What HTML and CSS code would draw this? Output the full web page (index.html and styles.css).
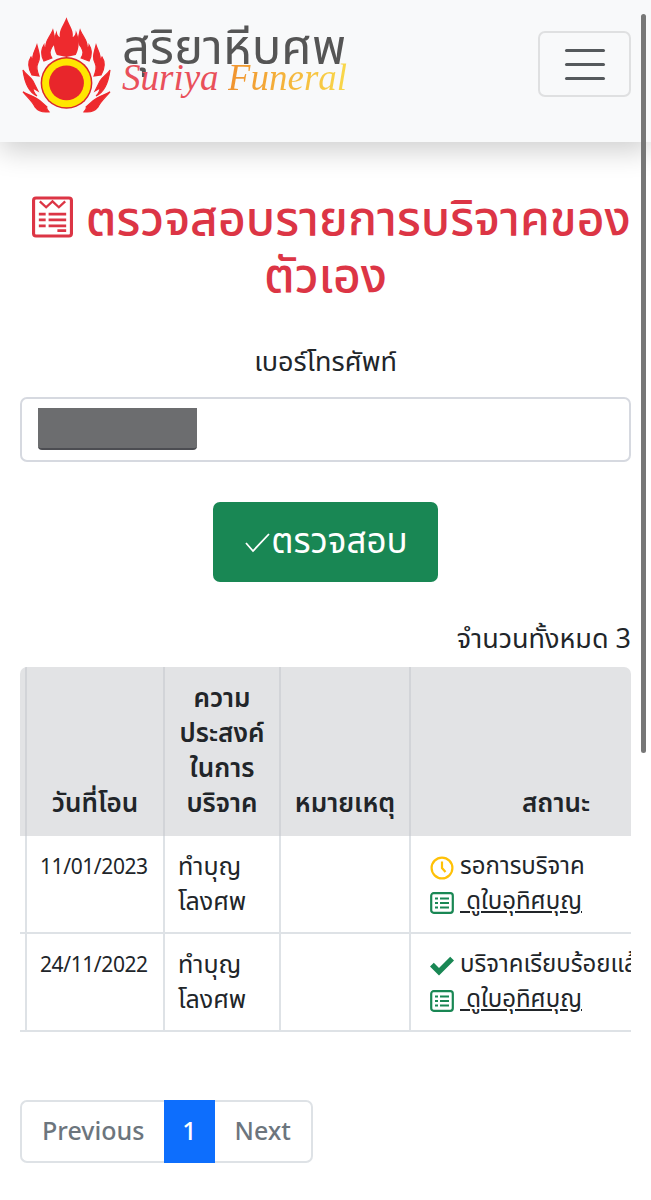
FILE: index.html
```html
<!DOCTYPE html>
<html lang="th">
  <head>
    <meta charset="utf-8">
    <title>ตรวจสอบรายการบริจาค</title>
    <link rel="stylesheet" href="styles.css">
  </head>
  <body>
    <div class="scrollbar"></div>
    <nav class="navbar">
      <a class="brand" href="#">
        <svg class="brand-logo" viewBox="0 0 89.4 98" width="89" height="98">
          <g id="flame-half" fill="#ee2a2e" stroke="#ee2a2e" stroke-width="1.2">
            <path d="M31 15C33 22 34 28 30 32 28 36 27 38 30 43L22 46C18 38 20 33 22 30 22 32 23 33 24 33 23 26 28 22 31 15z"/>
            <path d="M15 30C17 38 19 42 16 48 14 52 15 56 17 61L10 60C5 51 7 45 9 42 10 44 10 45 11 45 10 40 13 36 15 30z"/>
            <path d="M1 55C4 60 9 62 11 66 13 70 14 72 16 76L11 73C11 75 12 78 15 81 8 78 3 70 1 55z"/>
            <path d="M1 77C6 80 13 82 18 86L25 92C24 94 26 96 27 97 20 98 16 96 13 92 10 86 5 82 1 77z"/>
          </g>
          <use href="#flame-half" transform="matrix(-1 0 0 1 89.4 0)"/>
          <path fill="#ee2a2e" d="M44.7 2C47 10 52 14 51 22 54 20 54 17 54 15 58 24 58 32 54 40L44.7 42 35 40C31 32 31 24 35 15 35 17 35 20 38 22 37 14 42 10 44.7 2z"/>
          <circle cx="44.7" cy="68" r="26" fill="#d9262c"/>
          <circle cx="44.7" cy="68" r="24.5" fill="#ffe600"/>
          <circle cx="44.7" cy="68" r="17.5" fill="#e8262b"/>
        </svg>
        <span class="brand-text">
          <span class="brand-thai">สุริยาหีบศพ</span>
          <span class="brand-latin"><span class="brand-s">Suriya</span> <span class="brand-f">Funeral</span></span>
        </span>
      </a>
      <button class="toggler" aria-label="menu">
        <span></span><span></span><span></span>
      </button>
    </nav>

    <main class="container">
      <h1 class="title">
        <svg class="title-icon" viewBox="0 0 42 42" width="41" height="42" fill="none" stroke="#dc3545" stroke-width="3.2">
          <rect x="1.6" y="1.6" width="38.8" height="38.8" rx="2.5"/>
          <path d="M8 5l6.5 6L21 5l6.5 6L34 5" stroke-width="2.4"/>
          <path d="M7 18h7M17 18h18M7 24h7M17 24h18M7 30h7M17 30h18M26 35h9" stroke-width="2.8"/>
        </svg>
        ตรวจสอบรายการบริจาคของ<br>ตัวเอง
      </h1>

      <form class="search">
        <label class="search-label" for="phone">เบอร์โทรศัพท์</label>
        <div class="search-input" id="phone"><span class="redacted"></span></div>
        <button class="btn-check" type="button">
          <svg viewBox="0 0 28 28" width="28" height="28" fill="none" stroke="#fff" stroke-width="1.8"><path d="M3 15l7 8L26 6"/></svg>ตรวจสอบ
        </button>
      </form>

      <div class="total">จำนวนทั้งหมด 3</div>

      <div class="table-wrap">
        <table class="grid">
          <thead>
            <tr>
              <th class="col-cut"></th>
              <th class="col-date">วันที่โอน</th>
              <th class="col-purpose">ความ<br>ประสงค์<br>ในการ<br>บริจาค</th>
              <th class="col-note">หมายเหตุ</th>
              <th class="col-status">สถานะ</th>
            </tr>
          </thead>
          <tbody>
            <tr>
              <td></td>
              <td class="date">11/01/2023</td>
              <td>ทำบุญ<br>โลงศพ</td>
              <td></td>
              <td class="status-cell">
                <div class="status">
                  <svg viewBox="0 0 24 24" width="24" height="24" fill="none" stroke="#ffc107" stroke-width="2.2"><circle cx="12" cy="12" r="10.4"/><path d="M12 5.5V12l3.5 4"/></svg>
                  รอการบริจาค
                </div>
                <a class="doc-link" href="#">
                  <svg viewBox="0 0 24 22" width="24" height="22"><use href="#list-icon"/></svg>
                  <span>&nbsp;ดูใบอุทิศบุญ</span>
                </a>
              </td>
            </tr>
            <tr>
              <td></td>
              <td class="date">24/11/2022</td>
              <td>ทำบุญ<br>โลงศพ</td>
              <td></td>
              <td class="status-cell">
                <div class="status">
                  <svg viewBox="0 0 24 24" width="24" height="24" fill="#198754"><path d="M0 12.5l3.8-3.8 5.2 5.2L20.2 2.8 24 6.6 9 21.5z"/></svg>
                  บริจาคเรียบร้อยแล้ว
                </div>
                <a class="doc-link" href="#">
                  <svg viewBox="0 0 24 22" width="24" height="22"><use href="#list-icon"/></svg>
                  <span>&nbsp;ดูใบอุทิศบุญ</span>
                </a>
              </td>
            </tr>
          </tbody>
        </table>
      </div>

      <ul class="pagination">
        <li class="page-item">Previous</li>
        <li class="page-item active">1</li>
        <li class="page-item">Next</li>
      </ul>
    </main>

    <svg width="0" height="0" class="defs">
      <symbol id="list-icon" viewBox="0 0 24 22">
        <rect x="1.2" y="1.2" width="21.6" height="19.6" rx="2.5" fill="none" stroke="#198754" stroke-width="2.2"/>
        <path d="M5 6.5h3M5 11h3M5 15.5h3M10 6.5h9M10 11h9M10 15.5h9" stroke="#198754" stroke-width="2.2"/>
      </symbol>
    </svg>
  </body>
</html>
```

FILE: styles.css
```css
/* Reset default styles */
* {
  margin: 0;
  padding: 0;
  box-sizing: border-box;
}

/* Page styles */
body {
  font-family: "Noto Sans Thai", "Noto Sans", "DejaVu Sans", sans-serif;
  font-size: 27px;
  font-weight: 400;
  color: #212529;
  background-color: #fff;
  overflow: hidden;
}

.defs {
  position: absolute;
}

.scrollbar {
  position: absolute;
  top: 14px;
  left: 641px;
  width: 5px;
  height: 739px;
  border-radius: 3px;
  background-color: #777;
}

.navbar {
  height: 142px;
  padding: 15px 20px 0 22px;
  display: flex;
  justify-content: space-between;
  align-items: flex-start;
  background-color: #f8f9fa;
  box-shadow: 0 8px 27px rgba(0, 0, 0, 0.2);
}

.brand {
  display: flex;
  gap: 11px;
  text-decoration: none;
}

.brand-text {
  display: flex;
  flex-direction: column;
  padding-top: 8px;
}

.brand-thai {
  font-size: 49px;
  line-height: 52px;
  color: #555;
}

.brand-latin {
  margin-top: -17px;
  font-family: "Liberation Serif", serif;
  font-style: italic;
  font-size: 37px;
  line-height: 40px;
  white-space: nowrap;
}

.brand-s {
  color: #e9505a;
}

.brand-f {
  color: transparent;
  background: linear-gradient(90deg, #f0922e, #f9d84a);
  -webkit-background-clip: text;
  background-clip: text;
}

.toggler {
  width: 93px;
  height: 66px;
  margin-top: 16px;
  display: flex;
  flex-direction: column;
  gap: 11px;
  align-items: center;
  justify-content: center;
  background: transparent;
  border: 2px solid #dfe0e1;
  border-radius: 7px;
}

.toggler span {
  width: 40px;
  height: 3px;
  border-radius: 2px;
  background-color: #55595c;
}

.container {
  padding: 0 20px;
}

.title {
  margin-top: 50px;
  font-size: 48px;
  font-weight: 500;
  line-height: 57px;
  text-align: center;
  white-space: nowrap;
  color: #dc3545;
}

.title-icon {
  vertical-align: -3px;
  margin-left: 12px;
}

.search {
  margin-top: 39px;
  display: flex;
  flex-direction: column;
  align-items: center;
}

.search-label {
  line-height: 36px;
}

.search-input {
  width: 100%;
  height: 65px;
  margin-top: 16px;
  padding: 9px 16px;
  border: 2px solid #d6d9e0;
  border-radius: 7px;
  background-color: #fff;
}

.redacted {
  display: block;
  width: 159px;
  height: 42px;
  border-bottom: 2px solid #4c4d52;
  border-radius: 0 0 4px 4px;
  background-color: #6c6d6f;
}

.btn-check {
  width: 225px;
  height: 80px;
  margin-top: 40px;
  display: flex;
  align-items: center;
  justify-content: center;
  font-family: inherit;
  font-size: 35px;
  font-weight: 400;
  color: #fff;
  background-color: #198754;
  border: none;
  border-radius: 7px;
}

.total {
  margin-top: 40px;
  line-height: 36px;
  text-align: right;
}

.table-wrap {
  margin-top: 9px;
  overflow: hidden;
  border-radius: 7px 7px 0 0;
}

.grid {
  width: 929px;
  table-layout: fixed;
  border-collapse: collapse;
}

.grid th {
  height: 169px;
  padding: 0 0 14px;
  vertical-align: bottom;
  text-align: center;
  font-size: 26px;
  font-weight: 600;
  line-height: 35px;
  background-color: #e2e3e5;
  border-right: 2px solid #d2d4d8;
}

.grid td {
  height: 97px;
  padding: 14px 14px 12px 13px;
  vertical-align: top;
  line-height: 35px;
  font-size: 25px;
  border-right: 2px solid #dee2e6;
  border-bottom: 2px solid #dee2e6;
}

.grid td:first-child {
  padding: 0;
}

.grid .date {
  font-size: 21px;
  letter-spacing: -0.4px;
}

.grid .status-cell {
  padding-left: 19px;
  font-size: 24px;
}

.col-cut {
  width: 6px;
}

.col-date {
  width: 138px;
}

.col-purpose {
  width: 116px;
}

.col-note {
  width: 130px;
}

.grid .col-status {
  width: 539px;
  text-align: left;
  padding-left: 111px;
}

.status,
.doc-link {
  display: flex;
  align-items: center;
  gap: 6px;
  white-space: nowrap;
}

.doc-link {
  color: #212529;
}

.doc-link span {
  text-decoration: underline;
}

.pagination {
  margin-top: 68px;
  display: flex;
  list-style: none;
  font-size: 25px;
  font-weight: 500;
}

.page-item {
  height: 63px;
  padding: 0 20px;
  display: flex;
  align-items: center;
  color: #6c757d;
  background-color: #fff;
  border: 2px solid #dee2e6;
  border-left: none;
  border-right: none;
}

.page-item:first-child {
  border-left: 2px solid #dee2e6;
  border-radius: 7px 0 0 7px;
}

.page-item:last-child {
  border-right: 2px solid #dee2e6;
  border-radius: 0 7px 7px 0;
}

.page-item.active {
  padding: 0 18px;
  color: #fff;
  background-color: #0d6efd;
  border-color: #0d6efd;
}
```
